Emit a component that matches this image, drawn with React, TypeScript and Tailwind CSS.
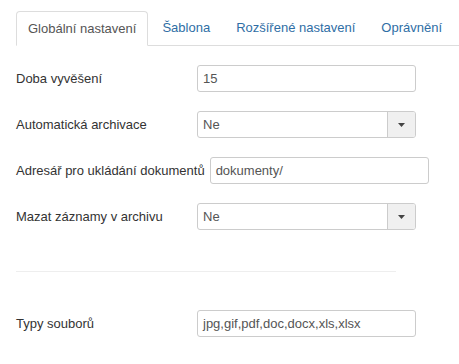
import React from "react";

const tabs = ["Globální nastavení", "Šablona", "Rozšířené nastavení", "Oprávnění"];

function Label({ children }: { children: React.ReactNode }) {
  return <label className="min-w-[176px] mr-[5px] text-[13px] text-[#333] whitespace-nowrap">{children}</label>;
}

function TextInput({ value }: { value: string }) {
  return (
    <div className="w-[219px] h-[27px] border border-[#ccc] rounded-[3px] pl-[5px] flex items-center text-[13px] text-[#555] bg-white shrink-0">
      {value}
    </div>
  );
}

function Select({ value }: { value: string }) {
  return (
    <div className="w-[219px] h-[27px] border border-[#ccc] rounded-[3px] flex items-stretch text-[13px] text-[#555] bg-white overflow-hidden shrink-0">
      <div className="flex-1 flex items-center pl-[5px]">{value}</div>
      <div className="w-[28px] bg-[#f0f0f0] border-l border-[#ccc] flex items-center justify-center">
        <svg width="7" height="4" viewBox="0 0 7 4">
          <path d="M0 0h7L3.5 4z" fill="#444" />
        </svg>
      </div>
    </div>
  );
}

export default function App() {
  return (
    <div className="w-[459px] h-[364px] bg-white pt-[11px] pl-[16px] overflow-hidden font-['Liberation_Sans',Arial,sans-serif]">
      <div className="flex border-b border-[#ddd] h-[35px]">
        {tabs.map((t, i) => (
          <div
            key={t}
            className={
              i === 0
                ? "shrink-0 whitespace-nowrap px-[11px] h-[35px] flex items-center text-[13px] text-[#555] bg-white border border-[#ddd] border-b-white rounded-t-[4px] mr-[1px]"
                : "shrink-0 whitespace-nowrap px-[12px] h-[34px] flex items-center text-[13px] text-[#2f6ea5] mx-[1px]"
            }
          >
            {t}
          </div>
        ))}
      </div>

      <div className="flex flex-col pt-[19px]">
        <div className="flex items-center h-[27px] mb-[19px]">
          <Label>Doba vyvěšení</Label>
          <TextInput value="15" />
        </div>
        <div className="flex items-center h-[27px] mb-[19px]">
          <Label>Automatická archivace</Label>
          <Select value="Ne" />
        </div>
        <div className="flex items-center h-[27px] mb-[19px]">
          <Label>Adresář pro ukládání dokumentů</Label>
          <TextInput value="dokumenty/" />
        </div>
        <div className="flex items-center h-[27px]">
          <Label>Mazat záznamy v archivu</Label>
          <Select value="Ne" />
        </div>
        <div className="w-[380px] border-t border-[#eee] mt-[41px] mb-[38px]" />
        <div className="flex items-center h-[27px]">
          <Label>Typy souborů</Label>
          <TextInput value="jpg,gif,pdf,doc,docx,xls,xlsx" />
        </div>
      </div>
    </div>
  );
}
